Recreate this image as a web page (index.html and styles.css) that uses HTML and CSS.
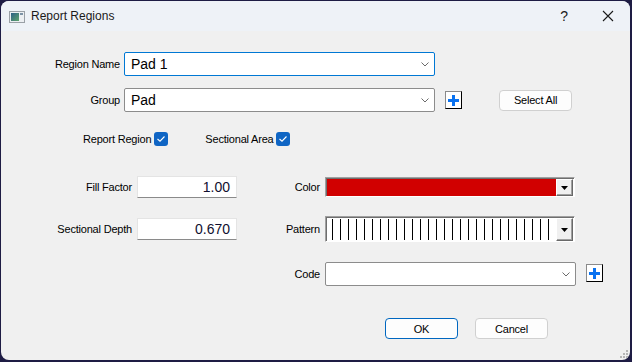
FILE: index.html
```html
<!DOCTYPE html>
<html lang="en">
<head>
    <meta charset="UTF-8">
    <title>Report Regions</title>
    <link rel="stylesheet" href="styles.css">
</head>
<body>
    <div class="window">
        <div class="titlebar">
            <svg class="app-icon" width="16" height="12" viewBox="0 0 16 12">
                <defs>
                    <linearGradient id="ig" x1="0" y1="0" x2="1" y2="1">
                        <stop offset="0" stop-color="#2d5f86"/>
                        <stop offset="1" stop-color="#5fa46c"/>
                    </linearGradient>
                </defs>
                <rect x="0.5" y="0.5" width="15" height="11" fill="#eceff2" stroke="#9aa0a6"/>
                <rect x="2" y="2" width="8" height="8" fill="url(#ig)"/>
                <rect x="11" y="2" width="3" height="2" fill="#7d93a6"/>
            </svg>
            <span class="title">Report Regions</span>
            <span class="help">?</span>
            <svg class="close" width="12" height="12" viewBox="0 0 12 12">
                <path d="M1 1 L11 11 M11 1 L1 11" stroke="#1a1a1a" stroke-width="1.1"/>
            </svg>
        </div>

        <div class="content">
            <div class="row">
                <span class="lbl lbl-top">Region Name</span>
                <div class="combo combo-focus">
                    <span class="combo-text">Pad 1</span>
                    <svg class="chevron" width="8" height="5" viewBox="0 0 8 5"><polyline points="0.5,0.5 4,4 7.5,0.5" fill="none" stroke="#6b6b6b"/></svg>
                </div>
            </div>

            <div class="row row-group">
                <span class="lbl lbl-top">Group</span>
                <div class="combo">
                    <span class="combo-text">Pad</span>
                    <svg class="chevron" width="8" height="5" viewBox="0 0 8 5"><polyline points="0.5,0.5 4,4 7.5,0.5" fill="none" stroke="#6b6b6b"/></svg>
                </div>
                <span class="add-btn add-group">
                    <svg width="11" height="11" viewBox="0 0 11 11"><path d="M4 0h3v4h4v3H7v4H4V7H0V4h4z" fill="#0a72f0"/></svg>
                </span>
                <span class="btn btn-select">Select All</span>
            </div>

            <div class="row row-checks">
                <span class="check-item">Report Region
                    <span class="checkbox"><svg width="10" height="8" viewBox="0 0 10 8"><polyline points="1.5,4 4,6.2 8.5,1.5" fill="none" stroke="#fff" stroke-width="1.1"/></svg></span>
                </span>
                <span class="check-item check-area">Sectional Area
                    <span class="checkbox"><svg width="10" height="8" viewBox="0 0 10 8"><polyline points="1.5,4 4,6.2 8.5,1.5" fill="none" stroke="#fff" stroke-width="1.1"/></svg></span>
                </span>
            </div>

            <div class="fields">
                <span class="lbl lbl-left">Fill Factor</span>
                <div class="num-input">1.00</div>
                <span class="lbl">Color</span>
                <div class="pick-box pick-color">
                    <div class="swatch swatch-color"></div>
                    <span class="drop-btn"><svg width="7" height="4" viewBox="0 0 7 4"><path d="M0 0h7L3.5 4z" fill="#000"/></svg></span>
                </div>

                <span class="lbl lbl-left">Sectional Depth</span>
                <div class="num-input">0.670</div>
                <span class="lbl">Pattern</span>
                <div class="pick-box pick-pattern">
                    <div class="swatch swatch-pattern"></div>
                    <span class="drop-btn"><svg width="7" height="4" viewBox="0 0 7 4"><path d="M0 0h7L3.5 4z" fill="#000"/></svg></span>
                </div>

                <span class="lbl lbl-code">Code</span>
                <div class="combo combo-code">
                    <span class="combo-text"></span>
                    <svg class="chevron" width="8" height="5" viewBox="0 0 8 5"><polyline points="0.5,0.5 4,4 7.5,0.5" fill="none" stroke="#6b6b6b"/></svg>
                </div>
                <span class="add-btn add-code">
                    <svg width="11" height="11" viewBox="0 0 11 11"><path d="M4 0h3v4h4v3H7v4H4V7H0V4h4z" fill="#0a72f0"/></svg>
                </span>
            </div>

            <div class="buttons">
                <span class="btn btn-default">OK</span>
                <span class="btn">Cancel</span>
            </div>
        </div>

        <svg class="grip" width="10" height="10" viewBox="0 0 10 10">
            <g fill="#b5b5b5">
                <rect x="7" y="1" width="2" height="2"/>
                <rect x="4" y="4" width="2" height="2"/>
                <rect x="7" y="4" width="2" height="2"/>
                <rect x="1" y="7" width="2" height="2"/>
                <rect x="4" y="7" width="2" height="2"/>
                <rect x="7" y="7" width="2" height="2"/>
            </g>
        </svg>
    </div>
</body>
</html>
```

FILE: styles.css
```css
body {
    margin: 0;
    width: 632px;
    height: 362px;
    overflow: hidden;
    background-color: #1e1c44;
    font-family: 'Liberation Sans', Arial, sans-serif;
    font-size: 11px;
    letter-spacing: -0.2px;
    color: #000;
}
.window {
    position: relative;
    width: 629px;
    height: 359px;
    margin: 1px 0 0 1px;
    border-radius: 8px;
    background-color: #f0f0f0;
    overflow: hidden;
}
.titlebar {
    display: flex;
    align-items: center;
    height: 30px;
    background-color: #eef2f7;
    letter-spacing: 0;
}
.app-icon {
    margin: 1px 0 0 8px;
}
.title {
    margin-left: 6px;
    font-size: 12px;
    color: #1a1a1a;
}
.help {
    margin-left: auto;
    font-size: 14px;
    color: #1a1a1a;
}
.close {
    margin: 0 16px 0 34px;
}
.content {
    padding-top: 21px;
}
.row {
    display: flex;
    align-items: center;
    height: 24px;
}
.row-group {
    margin-top: 12px;
}
.lbl-top {
    width: 119px;
    margin-right: 4px;
    text-align: right;
}
.combo {
    display: flex;
    align-items: center;
    box-sizing: border-box;
    width: 311px;
    height: 24px;
    padding: 0 5px 0 6px;
    background-color: #fff;
    border: 1px solid #8c8c8c;
    border-radius: 2px;
}
.combo-focus {
    border-color: #0078d4;
}
.combo-text {
    flex-grow: 1;
    font-size: 14px;
    letter-spacing: 0;
    color: #000;
}
.chevron {
    margin-top: 1px;
}
.add-btn {
    display: flex;
    align-items: center;
    justify-content: center;
    box-sizing: border-box;
    width: 17px;
    height: 18px;
    background-color: #fff;
    border: 1px solid #000;
    border-top-color: #8a8a8a;
    border-left-color: #8a8a8a;
}
.add-group {
    margin-left: 10px;
}
.btn {
    display: flex;
    align-items: center;
    justify-content: center;
    box-sizing: border-box;
    width: 73px;
    height: 21px;
    background-color: #fdfdfd;
    border: 1px solid #d0d0d0;
    border-radius: 4px;
}
.btn-select {
    margin-left: 37px;
}
.btn-default {
    border-color: #0067c0;
}
.row-checks {
    margin: 20px 0 0 82px;
    height: 14px;
}
.check-item {
    display: flex;
    align-items: center;
    gap: 3px;
}
.check-area {
    margin-left: 37px;
}
.checkbox {
    display: flex;
    align-items: center;
    justify-content: center;
    width: 14px;
    height: 14px;
    border-radius: 3px;
    background-color: #0f65c4;
}
.fields {
    display: grid;
    grid-template-columns: 131px 100px 78px 250px 23px;
    grid-template-rows: 22px 26px 26px;
    column-gap: 5px;
    row-gap: 18px;
    margin-top: 30px;
    align-items: center;
}
.fields .lbl {
    justify-self: end;
}
.lbl-left {
    grid-column: 1;
}
.lbl-code {
    grid-column: 3;
    align-self: end;
    margin-bottom: 6px;
}
.num-input {
    box-sizing: border-box;
    height: 22px;
    padding: 1px 6px 0 0;
    background-color: #fff;
    border: 1px solid #e4e4e4;
    border-bottom-color: #8a8a8a;
    text-align: right;
    font-size: 14px;
    letter-spacing: 0;
    line-height: 19px;
    color: #101030;
}
.pick-box {
    display: flex;
    box-sizing: border-box;
    border: 1px solid #fff;
    border-top-color: #a0a0a0;
    border-left-color: #a0a0a0;
    box-shadow: inset 1px 1px 0 #6e6e6e;
    padding: 1px 1px 0 1px;
    background-color: #fff;
}
.pick-color {
    height: 20px;
}
.pick-pattern {
    height: 26px;
}
.swatch {
    flex-grow: 1;
}
.swatch-color {
    background-color: #d10000;
}
.swatch-pattern {
    margin: 1px 0;
    background-image: repeating-linear-gradient(to right, transparent 0, transparent 5px, #000 5px, #000 6px, transparent 6px, transparent 8px);
}
.drop-btn {
    display: flex;
    align-items: center;
    justify-content: center;
    box-sizing: border-box;
    width: 17px;
    background-color: #f0f0f0;
    border: 1px solid #696969;
    border-top-color: #fff;
    border-left-color: #fff;
    box-shadow: inset -1px -1px 0 #a0a0a0;
}
.combo-code {
    width: 251px;
    align-self: end;
}
.add-code {
    justify-self: end;
    align-self: end;
    margin-bottom: 4px;
}
.buttons {
    display: flex;
    gap: 17px;
    margin: 32px 0 0 384px;
}
.grip {
    position: absolute;
    right: 1px;
    bottom: 1px;
}
```
